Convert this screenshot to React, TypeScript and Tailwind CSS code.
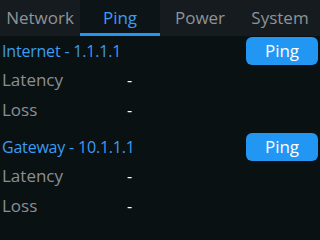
import { useState } from 'react';

const tabs = ['Network', 'Ping', 'Power', 'System'];

const targets = [
  { name: 'Internet', host: '1.1.1.1' },
  { name: 'Gateway', host: '10.1.1.1' },
];

function Stat({ label, value }: { label: string; value: string }) {
  return (
    <div className="flex items-center h-[30px]">
      <span className="w-[125px] text-[17px] text-[#8a8f93]">{label}</span>
      <span className="text-white">{value}</span>
    </div>
  );
}

export default function App() {
  const [active, setActive] = useState('Ping');

  return (
    <div
      className="w-[320px] h-[240px] bg-[#0a1113] text-[16px] overflow-hidden"
      style={{ fontFamily: '"Open Sans", "Liberation Sans", sans-serif' }}
    >
      <div className="flex h-[36px] bg-[#161b20]">
        {tabs.map((tab) => (
          <button
            key={tab}
            onClick={() => setActive(tab)}
            className={`w-[80px] flex items-center justify-center border-b-[3px] pt-[2px] text-[17px] ${
              active === tab
                ? 'bg-[#0d1418] text-[#3c9cf2] border-[#2196f3]'
                : 'text-[#8e9397] border-transparent'
            }`}
          >
            {tab}
          </button>
        ))}
      </div>

      {targets.map((t, i) => (
        <div key={t.name} className={`px-[2px] ${i === 0 ? 'pt-0' : 'pt-[7px]'}`}>
          <div className="flex items-center justify-between h-[29px]">
            <span className="text-[#3c9cf2] tracking-[-0.2px]">
              {t.name} - {t.host}
            </span>
            <button className="w-[72px] h-[28px] rounded-[6px] bg-[#2196f3] text-white text-[17px]">
              Ping
            </button>
          </div>
          <Stat label="Latency" value="-" />
          <Stat label="Loss" value="-" />
        </div>
      ))}
    </div>
  );
}
